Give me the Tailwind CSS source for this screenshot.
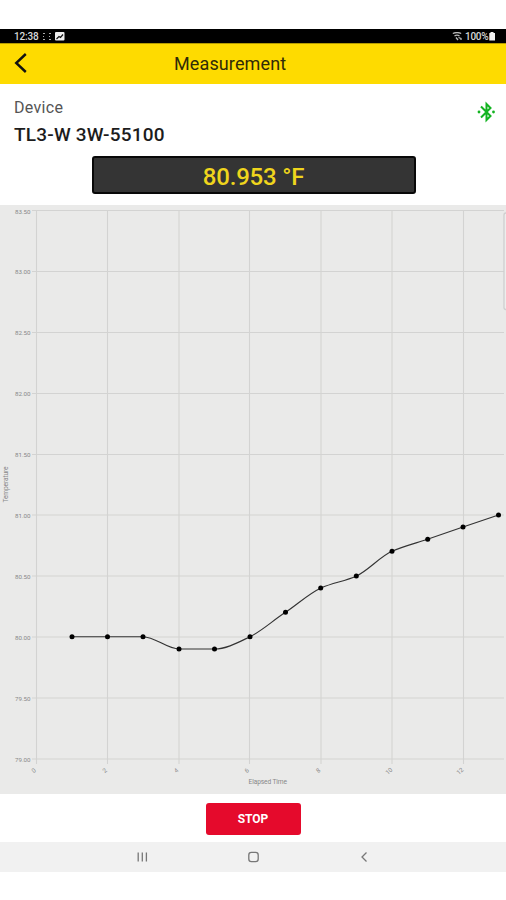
<!DOCTYPE html>
<html lang="en">
<head>
<meta charset="utf-8">
<title>Measurement</title>
<script src="https://cdn.jsdelivr.net/npm/@tailwindcss/browser@4"></script>
</head>
<body class="bg-white">
<div class="w-[506px] h-[900px] pt-[29px] flex flex-col overflow-hidden font-['Roboto',sans-serif]">
  <div class="h-[14px] shrink-0 bg-black text-[#d8d8d8] flex items-center justify-between pl-[14px] pr-[11px] text-[10px] leading-[14px] font-medium">
    <div class="flex items-center pt-px">
      <span class="w-[24px] tracking-[-0.2px]">12:38</span>
      <svg class="ml-[4px]" width="10" height="9" viewBox="0 0 10 9" fill="#aaa"><path d="M1 1h2v1H1zM7 1h2v1H7zM1 4h1v1H1zM7 4h1v1H7zM1 7h2v1H1zM7 7h2v1H7z"/></svg>
      <svg class="ml-[3px]" width="10" height="9" viewBox="0 0 10 9"><rect width="9.500" height="8.500" rx="1" fill="#eee"/><path d="M1.500 7 4 4.500 5.500 5.500 8 2.500" fill="none" stroke="#111" stroke-width="1.200"/></svg>
    </div>
    <div class="flex items-center pt-px">
      <svg width="10" height="9" viewBox="0 0 10 9" fill="none" stroke="#bbb" stroke-width="1.300"><path d="M.8 1.500Q5 -.3 9.200 1.500M2.500 4Q5 2.200 7.500 4M4 5.500 6 8M6.500 5.500 9 6.500V8"/></svg>
      <span class="ml-[3px] w-[25px] tracking-[-0.3px]">100%</span>
      <svg class="-ml-px" width="6" height="9" viewBox="0 0 6 9" fill="#f2f2f2"><path d="M1.500 0h3v1H6v7.500H.3V1h1.200z"/></svg>
    </div>
  </div>
  <header class="h-[41px] shrink-0 bg-[#fedb00] border-t border-[#b59c00] flex items-center relative">
    <svg class="ml-[13px] -mt-[3px]" width="16" height="22" viewBox="0 0 16 22" fill="none" stroke="#111" stroke-width="2.400"><path d="M12.800 2 3.200 11l9.600 9"/></svg>
    <h1 class="absolute left-[174px] top-[9px] text-[18px] leading-[22px] tracking-[0.12px] text-[#302b08] whitespace-nowrap">Measurement</h1>
  </header>
  <section class="h-[121px] shrink-0 px-[14px] pt-[13px]">
    <div class="flex justify-between h-[50px]">
      <div>
        <p class="text-[16px] leading-[22px] tracking-[0.3px] text-[#555]">Device</p>
        <p class="mt-[5px] text-[19px] leading-[22px] tracking-[0.2px] font-medium text-[#1c1c1c] whitespace-nowrap">TL3-W 3W-55100</p>
      </div>
      <svg class="mt-[4px] -mr-[4px]" width="19" height="22" viewBox="0 0 19 22" fill="none" stroke="#13b321" stroke-width="2"><path d="M4 5.500 13.500 15 9.500 19V3l4 4L4 16.500"/><circle cx="2" cy="11" r="1.400" fill="#13b321" stroke="none"/><circle cx="16.500" cy="11" r="1.400" fill="#13b321" stroke="none"/></svg>
    </div>
    <div class="mt-[9px] ml-[77.500px] w-[324px] h-[38px] rounded-[3px] border-2 border-[#080808] bg-[#343434] flex items-center justify-center text-[24px] font-medium text-[#efd51d] leading-none tracking-[-0.2px]"><span class="pt-[3px] whitespace-nowrap">80.953 °F</span></div>
  </section>
  <main class="h-[589px] shrink-0 bg-[#eaeae9]">
    <svg class="block" width="506" height="589" viewBox="0 205 506 589">
      <path d="M32 210.500H504M32 271.500H504M32 332.500H504M32 393.500H504M32 454.500H504M32 515H504M32 576H504M32 637H504M32 698H504M32 759H504" stroke="#d3d3d2" stroke-width="1.100"/>
      <path d="M36.500 210V764M107.500 210V764M179 210V764M249.500 210V764M321 210V764M392 210V764M463.500 210V764" stroke="#d3d3d2" stroke-width="1.100"/>
      <g font-size="6.200" fill="#888" text-anchor="end">
        <text x="30.500" y="213.500">83.50</text><text x="30.500" y="274.300">83.00</text><text x="30.500" y="335.300">82.50</text><text x="30.500" y="396.300">82.00</text><text x="30.500" y="457">81.50</text><text x="30.500" y="518">81.00</text><text x="30.500" y="578.500">80.50</text><text x="30.500" y="639.500">80.00</text><text x="30.500" y="700.500">79.50</text><text x="30.500" y="761.500">79.00</text>
        <text transform="translate(36.500 771) rotate(-40)">0</text><text transform="translate(107.500 771) rotate(-40)">2</text><text transform="translate(179 771) rotate(-40)">4</text><text transform="translate(249.500 771) rotate(-40)">6</text><text transform="translate(321 771) rotate(-40)">8</text><text transform="translate(393 770.500) rotate(-40)">10</text><text transform="translate(464 770.500) rotate(-40)">12</text>
      </g>
      <text x="248.500" y="784.300" font-size="6.600" fill="#888" textLength="38.500">Elapsed Time</text>
      <text transform="translate(8 502.500) rotate(-90)" font-size="6.600" fill="#888" textLength="36">Temperature</text>
      <rect x="504" y="213" width="8" height="96.500" rx="2" fill="#eeeeed" stroke="#cfcfcf" stroke-width="1.300"/>
      <path d="M72 636.700H143C155 636.700 167 649 179 649H214.500C226.500 649 238 642.500 250 636.700C262 631 273.500 620 285.500 612.300C297.500 604.300 309 593.500 321 588C333 582.500 344.500 581.500 356.500 576C368.500 570.500 380 556.500 392 551.300C404 546 415.500 543.300 427.500 539.300L463 527L498.500 515" fill="none" stroke="#333" stroke-width="1.150"/>
      <g fill="#000"><circle cx="72" cy="636.700" r="2.500"/><circle cx="107.500" cy="636.700" r="2.500"/><circle cx="143" cy="636.700" r="2.500"/><circle cx="179" cy="649" r="2.500"/><circle cx="214.500" cy="649" r="2.500"/><circle cx="250" cy="636.700" r="2.500"/><circle cx="285.500" cy="612.300" r="2.500"/><circle cx="320.700" cy="588" r="2.500"/><circle cx="356.300" cy="576" r="2.500"/><circle cx="392" cy="551.300" r="2.500"/><circle cx="427.700" cy="539.300" r="2.500"/><circle cx="463" cy="527" r="2.500"/><circle cx="498.500" cy="515" r="2.500"/></g>
    </svg>
  </main>
  <div class="h-[48px] shrink-0 flex justify-center pt-[9px]">
    <button class="w-[95px] h-[32px] rounded-[3px] bg-[#e50a2c] text-white text-[12px] leading-none font-bold">STOP</button>
  </div>
  <nav class="h-[30px] shrink-0 bg-[#f1f1f1]">
    <svg class="block" width="506" height="30" viewBox="0 0 506 30" fill="none" stroke="#777" stroke-width="1.300"><path d="M138.200 10.500v9M142.300 10.500v9M146.400 10.500v9"/><rect x="248.800" y="10.300" width="9.400" height="9.400" rx="2.600"/><path d="M366.500 10.500 362 15l4.500 4.500"/></svg>
  </nav>
</div>
</body>
</html>
